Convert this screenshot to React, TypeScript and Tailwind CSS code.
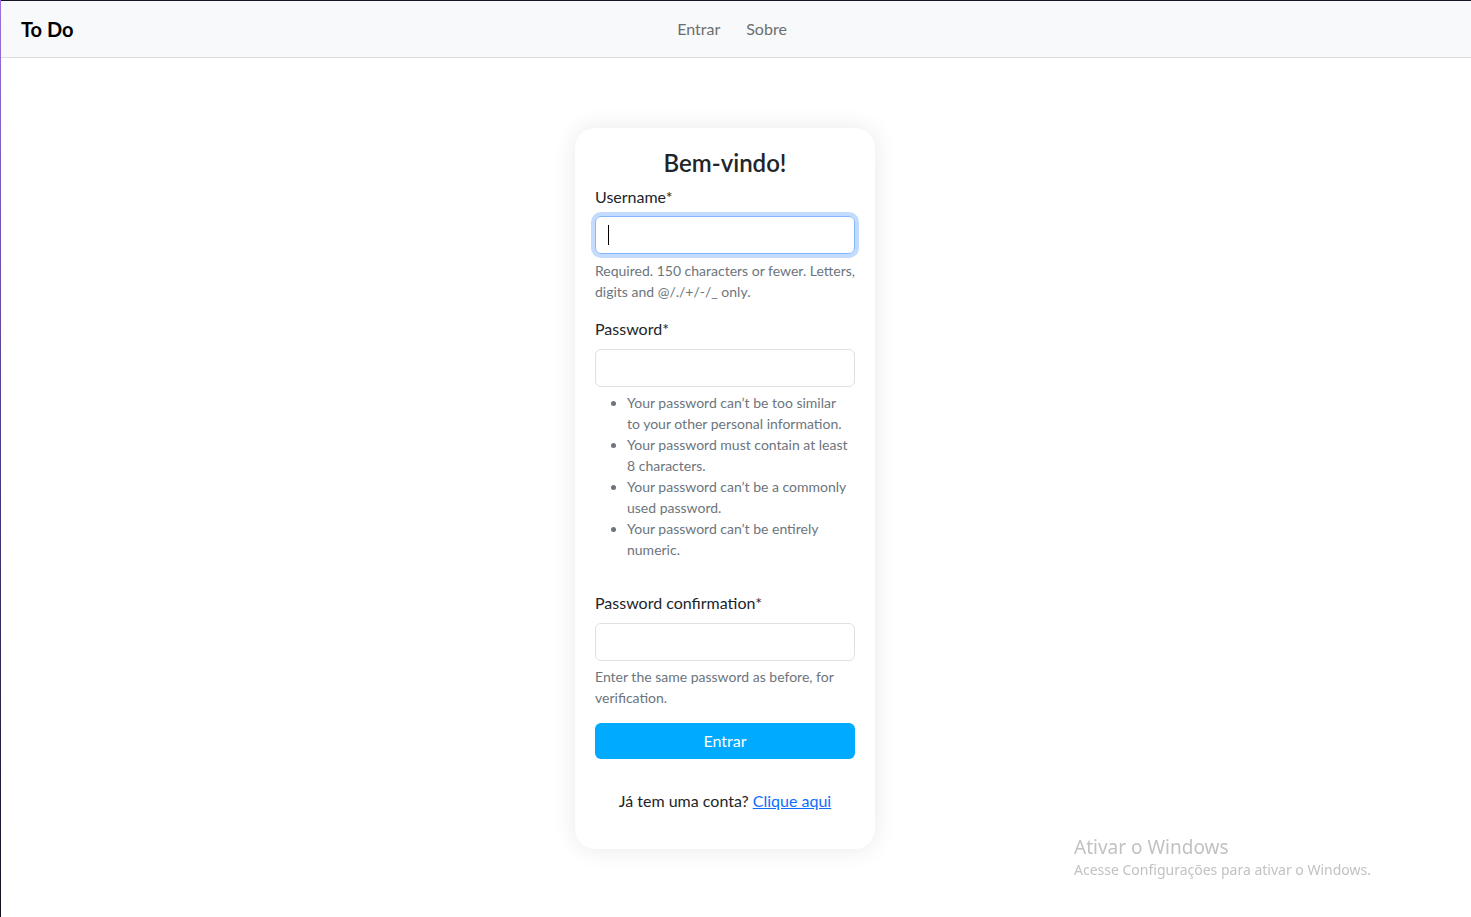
const RULES: string[][] = [
  ["Your password can\u2019t be too similar", "to your other personal information."],
  ["Your password must contain at least", "8 characters."],
  ["Your password can\u2019t be a commonly", "used password."],
  ["Your password can\u2019t be entirely", "numeric."],
];

const FONT = "font-['Lato',sans-serif]";

export default function App() {
  return (
    <div className={`min-h-[917px] bg-white ${FONT} text-[#212529] flex`}>
      {/* window frame */}
      <div className="w-px shrink-0 bg-gradient-to-b from-[#9b6fe0] via-[#4b3a8a] to-[#111122]" />
      <div className="flex-1 flex flex-col border-t border-[#151528]">
        {/* Navbar */}
        <header className="h-[57px] bg-[#f8f9fa] border-b border-[#dcdde0] grid grid-cols-[1fr_auto_1fr] items-center px-[20px]">
          <a href="#" className="text-[20px] font-bold text-black leading-none">
            To Do
          </a>
          <nav className="flex items-center gap-[26px] pr-[8px] text-[16px] text-[#6c6e70]">
            <a href="#">Entrar</a>
            <a href="#">Sobre</a>
          </nav>
          <div />
        </header>

        {/* Main */}
        <main className="flex justify-center pr-[22px] pt-[70px]">
          <div className="w-[300px] bg-white rounded-[20px] shadow-[0_0_24px_rgba(0,0,0,0.09)] px-[20px] pt-[20px] pb-[20px]">
            <h1 className="text-center text-[24px] font-semibold leading-[29px] mb-[8px]">
              Bem-vindo!
            </h1>

            {/* Username */}
            <div className="mb-[15px]">
              <label className="block text-[16px] leading-[24px] mb-[7px]">Username*</label>
              <div className="h-[38px] rounded-[6px] border border-[#86b7fe] ring-4 ring-[#0d6efd]/25 flex items-center px-[12px]">
                <span className="w-px h-[20px] bg-black" />
              </div>
              <p className="mt-[6px] text-[14px] leading-[21px] text-[#6c757d]">
                <span className="block whitespace-nowrap">Required. 150 characters or fewer. Letters,</span>
                <span className="block">digits and @/./+/-/_ only.</span>
              </p>
            </div>

            {/* Password */}
            <div>
              <label className="block text-[16px] leading-[24px] mb-[8px]">Password*</label>
              <div className="h-[38px] rounded-[6px] border border-[#dee2e6]" />
              <ul className="mt-[5px] pl-[32px] list-disc text-[14px] leading-[21px] text-[#6c757d] mb-[31px]">
                {RULES.map(([a, b]) => (
                  <li key={a}>
                    <span className="block whitespace-nowrap">{a}</span>
                    <span className="block whitespace-nowrap">{b}</span>
                  </li>
                ))}
              </ul>
            </div>

            {/* Password confirmation */}
            <div className="mb-[15px]">
              <label className="block text-[16px] leading-[24px] mb-[8px]">Password confirmation*</label>
              <div className="h-[38px] rounded-[6px] border border-[#dee2e6]" />
              <p className="mt-[5px] text-[14px] leading-[21px] text-[#6c757d]">
                Enter the same password as before, for verification.
              </p>
            </div>

            <button className="w-full h-[36px] rounded-[6px] bg-[#00aaff] text-white text-[16px]">
              Entrar
            </button>

            <p className="mt-[30px] mb-[16px] text-center text-[16px] leading-[24px]">
              Já tem uma conta?{" "}
              <a href="#" className="text-[#0d6efd] underline">
                Clique aqui
              </a>
            </p>
          </div>
        </main>
      </div>

      {/* Windows activation watermark */}
      <div className="fixed left-[1074px] top-[834px] text-[#c2c2c2] font-['Noto_Sans',sans-serif] pointer-events-none">
        <div className="text-[19px] leading-[26px]">Ativar o Windows</div>
        <div className="text-[14px] leading-[20px]">Acesse Configurações para ativar o Windows.</div>
      </div>
    </div>
  );
}
